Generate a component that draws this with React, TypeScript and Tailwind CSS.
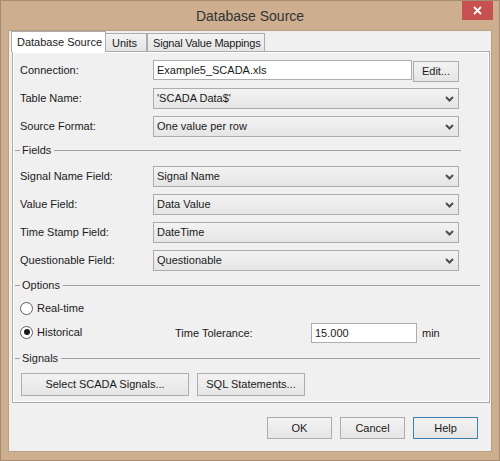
import React from "react";

function Chevron() {
  return (
    <svg width="9" height="6" viewBox="0 0 9 6" className="shrink-0">
      <path d="M1 1 L4.5 4.5 L8 1" fill="none" stroke="#4d4d4d" strokeWidth="2" />
    </svg>
  );
}

function Select({ value }: { value: string }) {
  return (
    <div className="h-[21px] w-[306px] flex items-center justify-between border border-[#acacac] bg-linear-to-b from-[#f3f3f3] to-[#e5e5e5] pl-[3px] pr-[4px]">
      <span>{value}</span>
      <Chevron />
    </div>
  );
}

function Row({ label, children, className = "" }: { label: string; children: React.ReactNode; className?: string }) {
  return (
    <div className={"flex items-center h-[21px] " + className}>
      <div className="w-[133px]">{label}</div>
      {children}
    </div>
  );
}

function Sep({ label, right, className = "" }: { label: string; right: string; className?: string }) {
  return (
    <div className={"flex items-center h-[14px] -ml-[5px] " + className}>
      <div className="w-[5px] border-t border-[#a0a0a0]" />
      <span className="ml-[2px] text-[#1e1e1e]">{label}</span>
      <div className={"flex-1 ml-[3px] border-t border-[#a0a0a0] " + right} />
    </div>
  );
}

function Btn({ children, className = "" }: { children: React.ReactNode; className?: string }) {
  return (
    <div
      className={
        "flex items-center justify-center border bg-linear-to-b from-[#f3f3f3] to-[#e5e5e5] " +
        className
      }
    >
      {children}
    </div>
  );
}

function Radio({ checked }: { checked?: boolean }) {
  return (
    <div className="w-[13px] h-[13px] rounded-full border border-[#5e5e5e] bg-white flex items-center justify-center shrink-0">
      {checked && <div className="w-[6px] h-[6px] rounded-full bg-[#1a1a1a]" />}
    </div>
  );
}

export default function App() {
  return (
    <div className="w-[500px] h-[461px] flex flex-col bg-[#cdae8f] border border-[#a58b71] overflow-hidden font-['Liberation_Sans',Arial,sans-serif] text-[11px] text-[#1a1a1a]">
      <div className="relative h-[29px] shrink-0 flex items-center justify-center">
        <span className="text-[14px] text-[#333] mt-[2px]">Database Source</span>
        <div className="absolute -top-[1px] right-[6px] w-[31px] h-[20px] bg-[#c75050] flex items-center justify-center">
          <svg width="9" height="9" viewBox="0 0 9 9">
            <path d="M1 1 L8 8 M8 1 L1 8" stroke="#fff" strokeWidth="1.8" />
          </svg>
        </div>
      </div>

      <div className="mx-[7px] h-[422px] bg-[#f0f0f0] border border-[#b8a085] flex flex-col">
        {/* Tabs */}
        <div className="relative z-10 h-[20px] flex items-end pl-[2px] mt-0 whitespace-nowrap">
          <div className="h-[21px] w-[95px] -mb-[1px] bg-white border border-b-0 border-[#acacac] flex items-center pl-[5px] pt-[1px] relative z-10">
            Database Source
          </div>
          <div className="h-[18px] w-[42px] -ml-[1px] border border-b-0 border-[#acacac] bg-linear-to-b from-[#f3f3f3] to-[#e5e5e5] flex items-center pl-[6px] pt-[1px]">
            Units
          </div>
          <div className="h-[18px] w-[118px] border border-b-0 border-[#acacac] bg-linear-to-b from-[#f3f3f3] to-[#e5e5e5] flex items-center pl-[5px] pt-[1px] tracking-[-0.2px] overflow-hidden">
            Signal Value Mappings
          </div>
        </div>

        {/* Panel */}
        <div className="ml-[3px] mr-[1px] h-[352px] border border-[#acacac] shadow-[inset_0_0_0_1px_#ffffff] bg-[#f0f0f0] pl-[7px] flex flex-col">
          <Row label="Connection:" className="mt-[8px]">
            <div className="h-[20px] w-[259px] border border-[#adadad] bg-white flex items-center pl-[3px] self-start">
              Example5_SCADA.xls
            </div>
            <Btn className="ml-[1px] w-[46px] h-[21px] border-[#acacac] mt-[1px]">Edit...</Btn>
          </Row>
          <Row label="Table Name:" className="mt-[7px]">
            <Select value="'SCADA Data$'" />
          </Row>
          <Row label="Source Format:" className="mt-[7px]">
            <Select value="One value per row" />
          </Row>

          <Sep label="Fields" right="mr-[28px]" className="mt-[6px]" />

          <Row label="Signal Name Field:" className="mt-[9px]">
            <Select value="Signal Name" />
          </Row>
          <Row label="Value Field:" className="mt-[7px]">
            <Select value="Data Value" />
          </Row>
          <Row label="Time Stamp Field:" className="mt-[7px]">
            <Select value="DateTime" />
          </Row>
          <Row label="Questionable Field:" className="mt-[7px]">
            <Select value="Questionable" />
          </Row>

          <Sep label="Options" right="mr-[9px]" className="mt-[7px]" />

          <div className="mt-[8px] h-[16px] flex items-center">
            <Radio />
            <span className="ml-[4px]">Real-time</span>
          </div>
          <div className="mt-[7px] h-[20px] flex items-center">
            <div className="w-[155px] flex items-center -mt-[2px]">
              <Radio checked />
              <span className="ml-[4px]">Historical</span>
            </div>
            <div className="w-[136px]">Time Tolerance:</div>
            <div className="h-[20px] w-[106px] border border-[#adadad] bg-white flex items-center pl-[3px]">15.000</div>
            <span className="ml-[5px]">min</span>
          </div>

          <Sep label="Signals" right="mr-[9px]" className="mt-[8px]" />

          <div className="mt-[8px] flex gap-[8px] ml-[1px]">
            <Btn className="w-[168px] h-[23px] border-[#acacac]">Select SCADA Signals...</Btn>
            <Btn className="w-[108px] h-[23px] border-[#acacac]">SQL Statements...</Btn>
          </div>
        </div>

        {/* Bottom buttons */}
        <div className="mt-[14px] flex justify-end gap-[8px] pr-[13px]">
          <Btn className="w-[65px] h-[22px] border-[#acacac]">OK</Btn>
          <Btn className="w-[65px] h-[22px] border-[#acacac]">Cancel</Btn>
          <Btn className="w-[65px] h-[22px] border-[#3c7fb1]">Help</Btn>
        </div>
      </div>
    </div>
  );
}
